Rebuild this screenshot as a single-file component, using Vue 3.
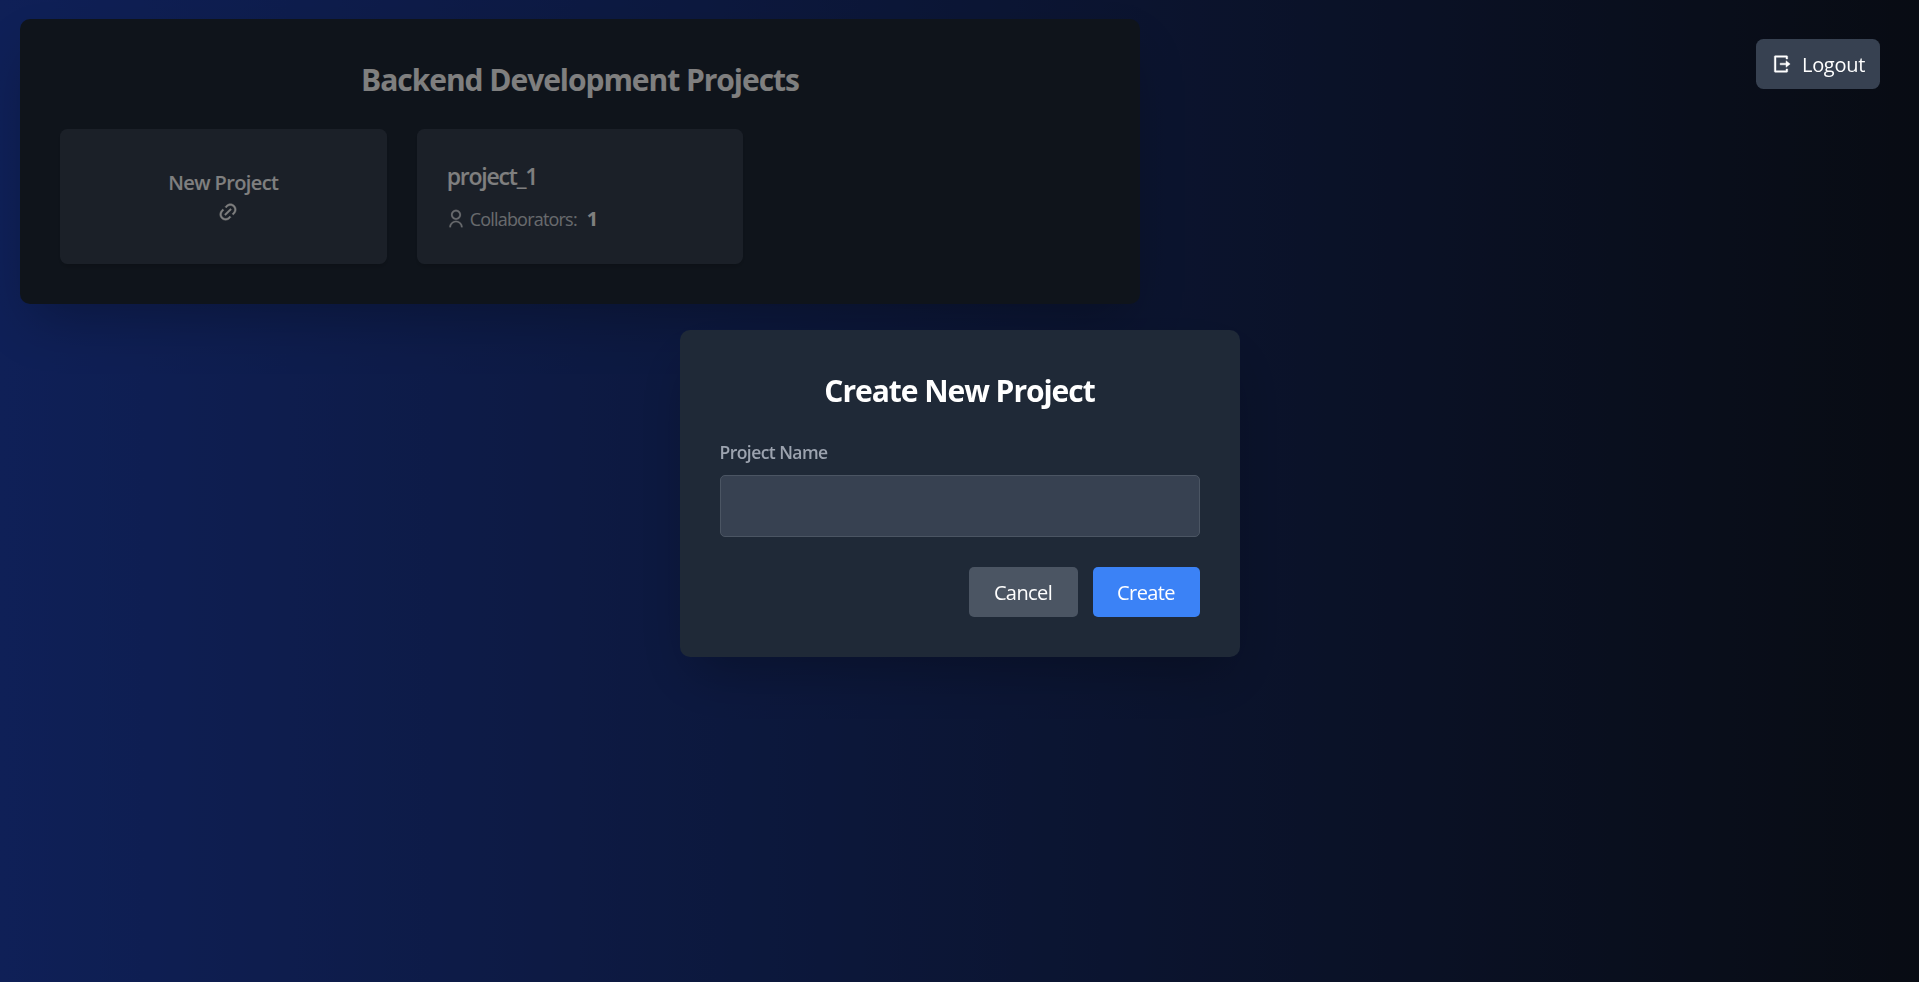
<script setup>
import { ref } from 'vue'

const projects = [{ name: 'project_1', collaborators: 1 }]
const projectName = ref('')
</script>

<template>
  <main class="page">
    <section class="panel">
      <h2 class="heading panel-title">Backend Development Projects</h2>
      <div class="cards">
        <button class="card new-card" type="button">
          <span class="new-label">New Project</span>
          <svg class="icon link-icon" viewBox="0 0 24 24"><path d="M18.3638 15.5355L16.9496 14.1213L18.3638 12.7071C20.3164 10.7545 20.3164 7.58866 18.3638 5.63604C16.4112 3.68341 13.2453 3.68341 11.2927 5.63604L9.87849 7.05025L8.46428 5.63604L9.87849 4.22182C12.6122 1.48815 17.0443 1.48815 19.778 4.22182C22.5117 6.95549 22.5117 11.3876 19.778 14.1213L18.3638 15.5355ZM15.5353 18.364L14.1211 19.7782C11.3875 22.5118 6.95531 22.5118 4.22164 19.7782C1.48797 17.0445 1.48797 12.6123 4.22164 9.87868L5.63585 8.46446L7.05007 9.87868L5.63585 11.2929C3.68323 13.2455 3.68323 16.4113 5.63585 18.364C7.58847 20.3166 10.7543 20.3166 12.7069 18.364L14.1211 16.9497L15.5353 18.364ZM14.8282 7.75736L16.2425 9.17157L9.17139 16.2426L7.75717 14.8284L14.8282 7.75736Z" /></svg>
        </button>
        <article v-for="p in projects" :key="p.name" class="card project-card">
          <h3 class="project-name">{{ p.name }}</h3>
          <div class="collab">
            <svg class="icon" viewBox="0 0 24 24"><path d="M4 22C4 17.5817 7.58172 14 12 14C16.4183 14 20 17.5817 20 22H18C18 18.6863 15.3137 16 12 16C8.68629 16 6 18.6863 6 22H4ZM12 13C8.685 13 6 10.315 6 7C6 3.685 8.685 1 12 1C15.315 1 18 3.685 18 7C18 10.315 15.315 13 12 13ZM12 11C14.21 11 16 9.21 16 7C16 4.79 14.21 3 12 3C9.79 3 8 4.79 8 7C8 9.21 9.79 11 12 11Z" /></svg>
            <span class="collab-label">Collaborators:</span>
            <span class="collab-count">{{ p.collaborators }}</span>
          </div>
        </article>
      </div>
    </section>

    <div class="overlay">
      <form class="modal" @submit.prevent>
        <h2 class="heading modal-title">Create New Project</h2>
        <label class="field-label" for="project-name">Project Name</label>
        <input id="project-name" v-model="projectName" class="field" type="text" />
        <div class="actions">
          <button class="btn cancel" type="button">Cancel</button>
          <button class="btn create" type="submit">Create</button>
        </div>
      </form>
    </div>

    <button class="logout" type="button">
      <svg class="icon" viewBox="0 0 24 24"><path d="M5 22C4.44772 22 4 21.5523 4 21V3C4 2.44772 4.44772 2 5 2H19C19.5523 2 20 2.44772 20 3V6H18V4H6V20H18V18H20V21C20 21.5523 19.5523 22 19 22H5ZM18 16V13H11V11H18V8L23 12L18 16Z" /></svg>
      <span class="logout-label">Logout</span>
    </button>
  </main>
</template>

<style>
body {
  background: #000;
  overflow: hidden;
}
</style>

<style scoped>
.page {
  box-sizing: border-box;
  height: 982px;
  padding: 19px 20px;
  background: linear-gradient(to right, #1e40af, #111827);
  color: #fff;
  font-family: "Open Sans", "Noto Sans", sans-serif;
  font-size: 20px;
  line-height: 30px;
}
h2, h3 { margin: 0; }
button, input { font: inherit; color: inherit; border: 0; margin: 0; }
.icon { width: 20px; height: 20px; fill: currentColor; stroke: currentColor; stroke-width: 0.5; flex: none; }
.heading {
  text-align: center;
  font-size: 30px;
  line-height: 40px;
  font-weight: 700;
  letter-spacing: -1.04px;
  padding-top: 1px;
}
.panel {
  box-sizing: border-box;
  width: 1120px;
  padding: 40px;
  border-radius: 10px;
  background: #1f2937;
  box-shadow: 0 25px 50px -12px rgba(0, 0, 0, 0.25);
}
.panel-title { margin-bottom: 29px; }
.cards { display: grid; grid-template-columns: repeat(3, 1fr); gap: 30px; }
.card {
  box-sizing: border-box;
  height: 135px;
  padding: 30px;
  border-radius: 7.5px;
  background: #374151;
  box-shadow: 0 4px 6px -1px rgba(0, 0, 0, 0.1), 0 2px 4px -2px rgba(0, 0, 0, 0.1);
}
.new-card { display: flex; flex-direction: column; align-items: center; justify-content: flex-start; padding-top: 39px; }
.new-label { font-weight: 600; letter-spacing: -0.6px; }
.link-icon { margin: 4px 0 0 10px; }
.project-name { font-size: 23px; line-height: 35px; font-weight: 600; letter-spacing: -1.2px; margin-bottom: 10px; }
.collab { display: flex; align-items: center; }
.collab .icon, .collab-label { color: #d1d5db; }
.collab .icon { margin-left: -1px; stroke-width: 0.2; }
.collab-label { font-size: 18px; letter-spacing: -0.8px; margin-left: 4px; }
.collab-count { font-weight: 700; margin-left: 10px; }
.overlay {
  position: fixed;
  inset: 0;
  display: flex;
  align-items: center;
  justify-content: center;
  background: rgba(0, 0, 0, 0.5);
}
.modal {
  box-sizing: border-box;
  width: 560px;
  height: 327px;
  padding: 40px;
  border-radius: 10px;
  background: #1f2937;
  box-shadow: 0 25px 50px -12px rgba(0, 0, 0, 0.25);
  margin-bottom: -5px;
}
.modal-title { margin-bottom: 29px; }
.field-label {
  display: block;
  box-sizing: border-box;
  height: 35px;
  line-height: 25px;
  font-size: 17.5px;
  font-weight: 600;
  color: #9ca3af;
  letter-spacing: -0.55px;
}
.field {
  display: block;
  box-sizing: border-box;
  width: 480px;
  height: 62px;
  padding: 15px;
  border: 1px solid #4b5563;
  border-radius: 5px;
  background: #374151;
  outline: none;
}
.actions { display: flex; justify-content: flex-end; gap: 15px; margin-top: 30px; }
.btn { height: 50px; padding: 1px 0 0; border-radius: 5px; letter-spacing: -0.6px; }
.cancel { width: 109px; background: #4b5563; }
.create { width: 107px; background: #3b82f6; }
.logout {
  position: fixed;
  top: 39px;
  right: 39px;
  display: flex;
  align-items: center;
  box-sizing: border-box;
  width: 124px;
  height: 50px;
  padding: 0 15px;
  border-radius: 7.5px;
  background: #374151;
  white-space: nowrap;
}
.logout-label { margin-left: 11px; padding-top: 2px; letter-spacing: -0.3px; }
</style>
